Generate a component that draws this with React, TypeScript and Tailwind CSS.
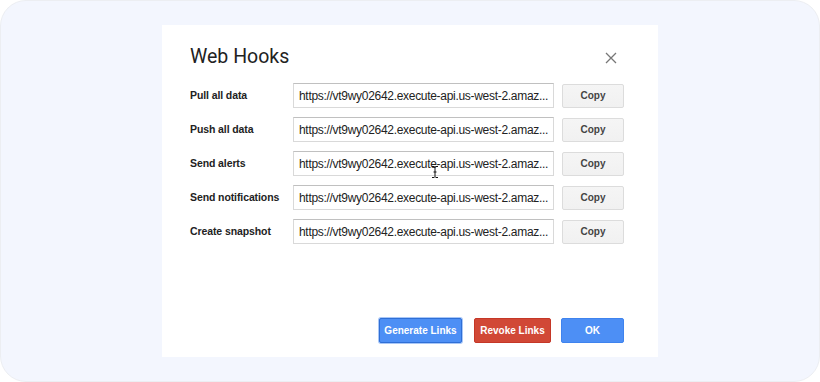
import React from "react";

const rows = ["Pull all data", "Push all data", "Send alerts", "Send notifications", "Create snapshot"];
const url = "https://vt9wy02642.execute-api.us-west-2.amaz...";

export default function App() {
  return (
    <div className="w-[820px] h-[382px] bg-white" style={{ fontFamily: "Arial, 'Liberation Sans', sans-serif" }}>
      <div className="w-full h-full rounded-[26px] bg-[#f3f6fe] border border-[#eceef2] flex items-center justify-center">
        <div className="w-[496px] h-[332px] bg-white flex flex-col pl-[28px] pr-[34px] pt-[17px] pb-[14px] relative">
          <div className="flex items-center justify-between">
            <div className="text-[19.5px] text-[#222]" style={{ fontFamily: "Roboto, 'Open Sans', sans-serif" }}>Web Hooks</div>
            <svg width="12" height="12" viewBox="0 0 12 12" className="mr-[7px] mt-[2px]">
              <path d="M1 1L11 11M11 1L1 11" stroke="#777" strokeWidth="1.3" />
            </svg>
          </div>
          <div className="flex flex-col gap-[9px] mt-[12px]">
            {rows.map((r) => (
              <div key={r} className="flex items-center h-[25px]">
                <div className="w-[103px] shrink-0 text-[10.5px] font-bold text-[#222] tracking-[-0.1px]">{r}</div>
                <div className="w-[261px] shrink-0 h-[25px] border border-[#d9d9d9] border-t-[#c0c0c0] flex items-center px-[5px] text-[12px] tracking-[-0.3px] text-[#222] whitespace-nowrap">
                  {url}
                </div>
                <button className="ml-[8px] shrink-0 w-[62px] h-[24px] rounded-[2px] border border-[#dcdcdc] bg-gradient-to-b from-[#f5f5f5] to-[#f1f1f1] text-[10px] font-bold text-[#444]">
                  Copy
                </button>
              </div>
            ))}
          </div>
          <div className="flex-1" />
          <div className="flex justify-end">
            <button className="w-[83px] h-[25px] rounded-[2px] bg-[#4d8ff5] text-white text-[10px] font-bold border border-[#2f6fd6] shadow-[0_0_0_1px_#a9c7f7]">
              Generate Links
            </button>
            <button className="ml-[12px] w-[77px] h-[25px] rounded-[2px] bg-[#d14836] border border-[#c53727] text-white text-[10px] font-bold">
              Revoke Links
            </button>
            <button className="ml-[10px] w-[63px] h-[25px] rounded-[2px] bg-[#4d8ff5] border border-[#3f83ee] text-white text-[10px] font-bold">
              OK
            </button>
          </div>
          <svg width="8" height="14" viewBox="0 0 8 14" className="absolute left-[269px] top-[140px]">
            <path d="M1 1.5h2.2L4 2.3l0.8-0.8H7M4 2.3V11.7M1 12.5h2.2L4 11.7l0.8 0.8H7M2.5 7H5.5" stroke="#111" strokeWidth="1" fill="none" />
          </svg>
        </div>
      </div>
    </div>
  );
}
